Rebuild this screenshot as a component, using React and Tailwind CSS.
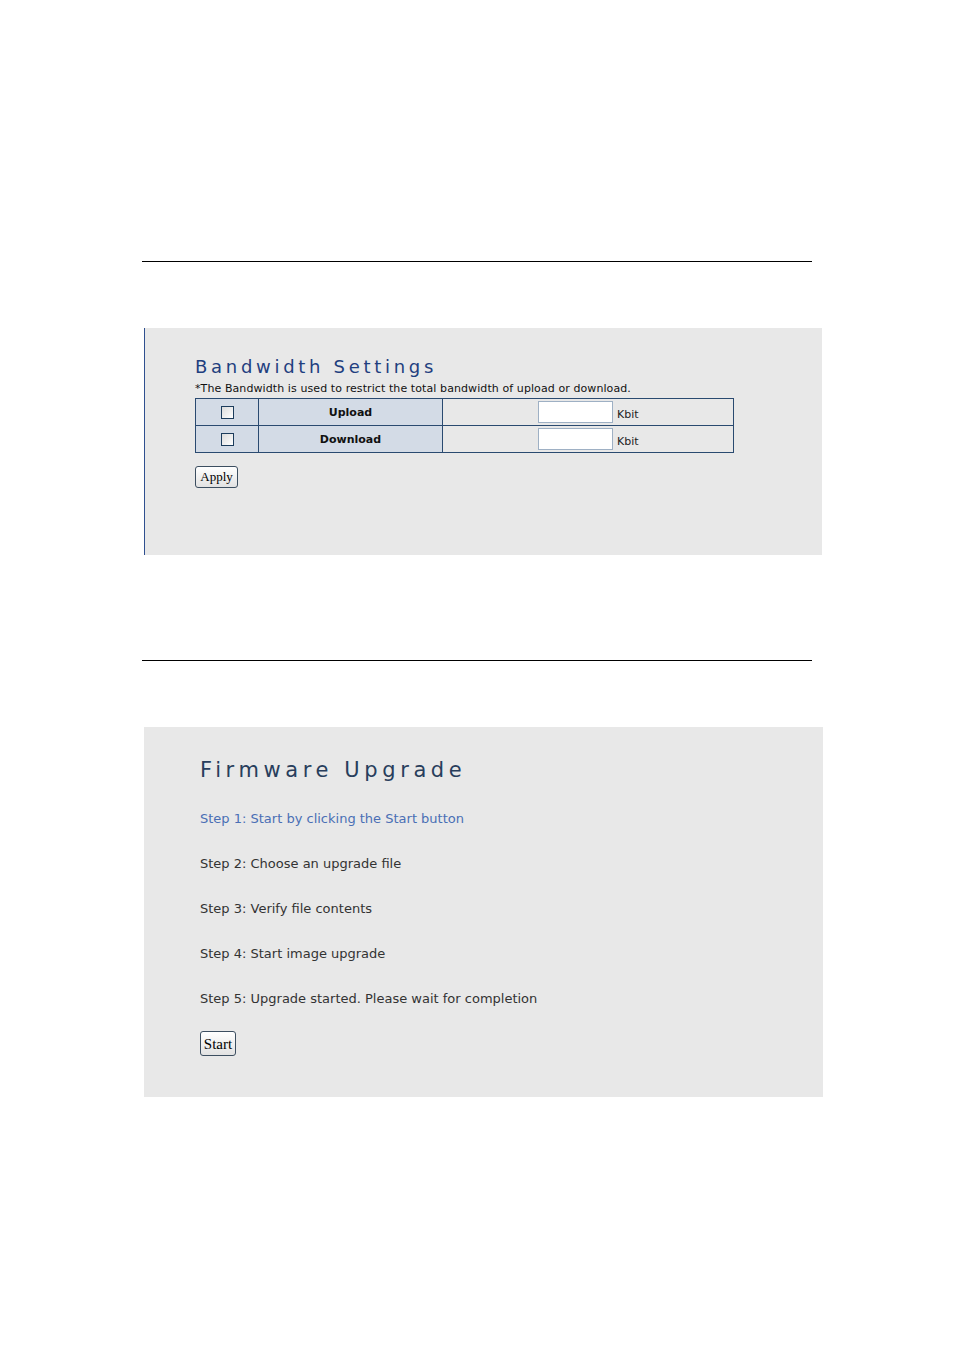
const verdana = { fontFamily: '"DejaVu Sans", Verdana, sans-serif' }

function Box() {
  return <span className="inline-block h-[13px] w-[13px] border border-[#1c3c5c] bg-gradient-to-br from-[#dcdcdc] to-white align-middle" />
}

function Row({ label }) {
  return (
    <tr className="h-[27px]">
      <td className="w-[63px] border border-[#2a4a70] bg-[#d3dbe6] text-center">
        <Box />
      </td>
      <td className="w-[184px] border border-[#2a4a70] bg-[#d3dbe6] pt-[2px] text-center text-[11px] font-bold text-[#111]">{label}</td>
      <td className="border border-[#2a4a70] bg-[#e8e8e8]">
        <div className="flex items-center pl-[95px]">
          <span className="h-[22px] w-[75px] border border-[#9eb0c4] bg-white" />
          <span className="ml-[4px] mt-[6px] text-[11px] text-[#222]">Kbit</span>
        </div>
      </td>
    </tr>
  )
}

function OldButton({ children, className }) {
  return (
    <button className={`rounded-[3px] border border-[#3c4e60] bg-gradient-to-b from-white to-[#e2e2e2] text-[#000] ${className}`} style={{ fontFamily: '"Liberation Serif", "Times New Roman", serif' }}>
      {children}
    </button>
  )
}

export default function App() {
  const steps = [
    'Step 2: Choose an upgrade file',
    'Step 3: Verify file contents',
    'Step 4: Start image upgrade',
    'Step 5: Upgrade started. Please wait for completion',
  ]

  return (
    <div className="min-h-[1350px] bg-white pt-[261px]" style={verdana}>
      <div className="ml-[142px] h-px w-[670px] bg-black" />

      <div className="ml-[144px] mt-[66px] h-[227px] w-[678px] border-l border-[#2f4f8f] bg-[#e8e8e8] pl-[50px] pt-[28px]">
        <h2 className="text-[18px] leading-[22px] tracking-[3.7px] text-[#1f3f7f]">Bandwidth Settings</h2>
        <p className="mt-[4px] text-[11px] leading-[13px] tracking-[0.09px] text-[#111]">*The Bandwidth is used to restrict the total bandwidth of upload or download.</p>
        <table className="mt-[3px] w-[539px] border-collapse">
          <tbody>
            <Row label="Upload" />
            <Row label="Download" />
          </tbody>
        </table>
        <OldButton className="mt-[13px] h-[22px] w-[43px] text-[13px] leading-[18px]">Apply</OldButton>
      </div>

      <div className="ml-[142px] mt-[105px] h-px w-[670px] bg-black" />

      <div className="ml-[144px] mt-[66px] h-[370px] w-[679px] bg-[#e8e8e8] pl-[56px] pt-[30px]">
        <h2 className="text-[21px] leading-[26px] tracking-[4.6px] text-[#283e5c]">Firmware Upgrade</h2>
        <p className="mt-[28px] text-[13px] leading-[16px] text-[#4a6fb5]">Step 1: Start by clicking the Start button</p>
        {steps.map(s => (
          <p key={s} className="mt-[29px] text-[13px] leading-[16px] text-[#333]">{s}</p>
        ))}
        <OldButton className="mt-[24px] h-[25px] w-[36px] text-[15px] leading-[20px]">Start</OldButton>
      </div>
    </div>
  )
}
